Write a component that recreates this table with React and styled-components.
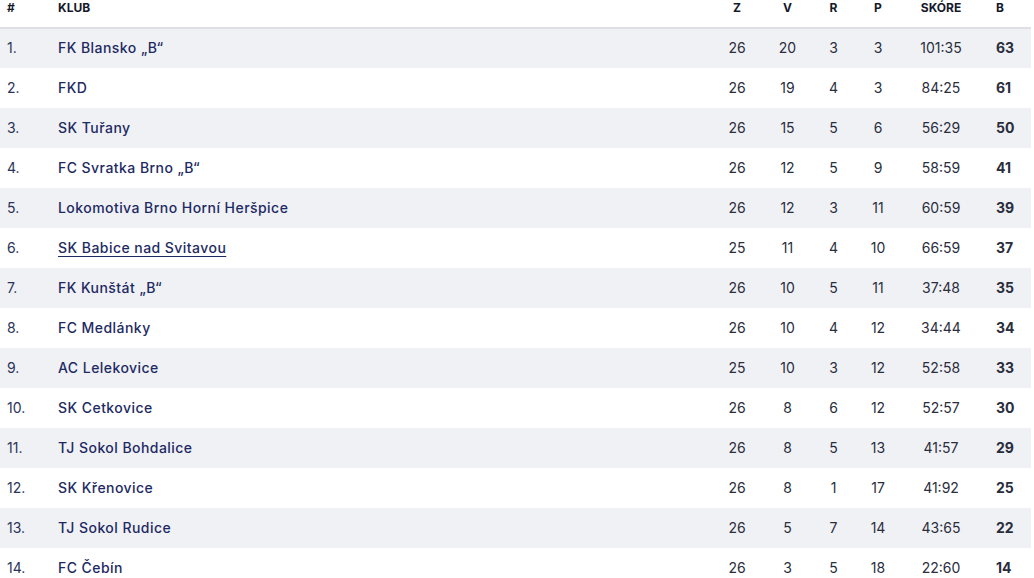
import React from "react";
import styled, { createGlobalStyle } from "styled-components";

const rows = [
  [1, "FK Blansko „B“", 26, 20, 3, 3, "101:35", 63],
  [2, "FKD", 26, 19, 4, 3, "84:25", 61],
  [3, "SK Tuřany", 26, 15, 5, 6, "56:29", 50],
  [4, "FC Svratka Brno „B“", 26, 12, 5, 9, "58:59", 41],
  [5, "Lokomotiva Brno Horní Heršpice", 26, 12, 3, 11, "60:59", 39],
  [6, "SK Babice nad Svitavou", 25, 11, 4, 10, "66:59", 37, true],
  [7, "FK Kunštát „B“", 26, 10, 5, 11, "37:48", 35],
  [8, "FC Medlánky", 26, 10, 4, 12, "34:44", 34],
  [9, "AC Lelekovice", 25, 10, 3, 12, "52:58", 33],
  [10, "SK Cetkovice", 26, 8, 6, 12, "52:57", 30],
  [11, "TJ Sokol Bohdalice", 26, 8, 5, 13, "41:57", 29],
  [12, "SK Křenovice", 26, 8, 1, 17, "41:92", 25],
  [13, "TJ Sokol Rudice", 26, 5, 7, 14, "43:65", 22],
  [14, "FC Čebín", 26, 3, 5, 18, "22:60", 14],
];

const GlobalStyle = createGlobalStyle`
  body {
    margin: 0;
    background: #fff;
    font-family: Inter, "Noto Sans", sans-serif;
    overflow: hidden;
  }
`;

const Table = styled.table`
  width: 1031px;
  table-layout: fixed;
  border-collapse: collapse;
`;

const HeadCell = styled.th`
  height: 28px;
  padding: 0 0 10px ${(p) => p.$pl || 0}px;
  box-sizing: border-box;
  border-bottom: 2px solid #dfe0e6;
  font-size: 12px;
  line-height: 16px;
  font-weight: 700;
  color: #15192b;
  text-transform: uppercase;
  text-align: ${(p) => p.$align || "center"};
  vertical-align: top;
`;

const Row = styled.tr`
  height: 40px;
  background: ${(p) => (p.$odd ? "#f0f1f5" : "#ffffff")};
`;

const Cell = styled.td`
  padding: 0 0 2px ${(p) => p.$pl || 0}px;
  font-size: 14px;
  color: #2a2d3c;
  text-align: ${(p) => p.$align || "center"};
  font-weight: ${(p) => (p.$bold ? 700 : 400)};
  vertical-align: middle;
  white-space: nowrap;
`;

const Rank = styled(Cell)`
  color: #2a3358;
`;

const Club = styled.a`
  color: #1d2a63;
  font-weight: 500;
  letter-spacing: 0.45px;
  text-decoration: ${(p) => (p.$active ? "underline" : "none")};
  text-underline-offset: 3px;
  text-decoration-thickness: 1px;
`;

export default function App() {
  return (
    <>
      <GlobalStyle />
      <Table>
        <colgroup>
          <col style={{ width: 50 }} />
          <col style={{ width: 662 }} />
          <col style={{ width: 50 }} />
          <col style={{ width: 51 }} />
          <col style={{ width: 41 }} />
          <col style={{ width: 48 }} />
          <col style={{ width: 78 }} />
          <col style={{ width: 51 }} />
        </colgroup>
        <thead>
          <tr>
            <HeadCell $align="left" $pl={7}>#</HeadCell>
            <HeadCell $align="left" $pl={8}>Klub</HeadCell>
            <HeadCell>Z</HeadCell>
            <HeadCell>V</HeadCell>
            <HeadCell>R</HeadCell>
            <HeadCell>P</HeadCell>
            <HeadCell>Skóre</HeadCell>
            <HeadCell $align="left" $pl={16}>B</HeadCell>
          </tr>
        </thead>
        <tbody>
          {rows.map(([rank, name, z, v, r, p, score, pts, active], i) => (
            <Row key={rank} $odd={i % 2 === 0}>
              <Rank $align="left" $pl={7}>{rank}.</Rank>
              <Cell $align="left" $pl={8}>
                <Club href="#" $active={active}>{name}</Club>
              </Cell>
              <Cell>{z}</Cell>
              <Cell>{v}</Cell>
              <Cell>{r}</Cell>
              <Cell>{p}</Cell>
              <Cell>{score}</Cell>
              <Cell $align="left" $pl={16} $bold>{pts}</Cell>
            </Row>
          ))}
        </tbody>
      </Table>
    </>
  );
}
